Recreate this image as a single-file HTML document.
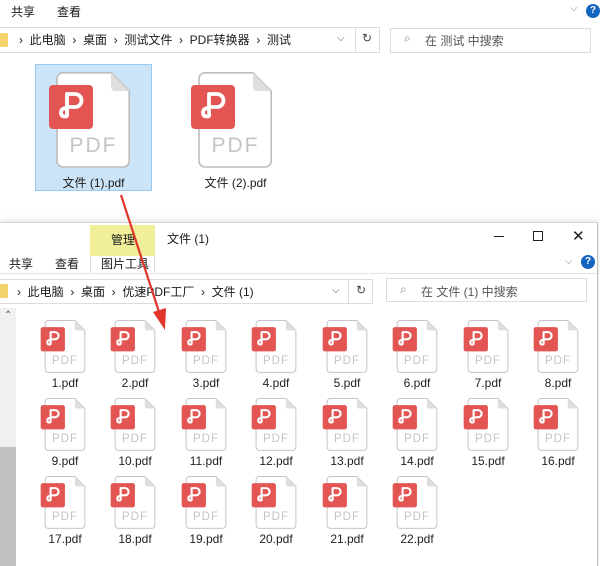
<!DOCTYPE html>
<html><head><meta charset="utf-8">
<style>
*{margin:0;padding:0;box-sizing:border-box}
body{width:600px;height:566px;overflow:hidden;background:#fff;position:relative;font-family:"Liberation Sans","Noto Sans CJK SC",sans-serif;font-size:12px;color:#1a1a1a}
.a{position:absolute;white-space:nowrap}
.ic{position:absolute}
.ic svg{position:absolute;left:-5px;top:0}
.ic .p{position:absolute;left:0;width:40px;text-align:center;top:35px;font-size:11.5px;color:#c4c4c4;letter-spacing:1px;font-family:"Liberation Sans",sans-serif}
.ic .l{position:absolute;left:-20px;width:80px;text-align:center;top:56px;font-size:12px;color:#222}
.box{position:absolute;border:1px solid #dcdcdc;background:#fff}
.help{position:absolute;width:14px;height:14px;border-radius:50%;background:#1565c0;color:#fff;font-size:10px;font-weight:bold;text-align:center;line-height:14px}
</style></head><body>
<svg width="0" height="0" style="position:absolute">
<defs>
<symbol id="ic" viewBox="-9 0 83 98">
<path d="M6 0.8 H54 L72.2 19 V89 a6 6 0 0 1 -6 6 H6 a6 6 0 0 1 -6 -6 V6.8 a6 6 0 0 1 6 -6z" fill="#fff" stroke="#bdbdbd" stroke-width="1.6"/>
<path d="M54 0.8 V15 a4 4 0 0 0 4 4 H72.2z" fill="#dedede"/>
<rect x="-8" y="13" width="44" height="44" rx="4" fill="#e35553"/>
<path d="M10 41 V22 h8 a6.5 6.5 0 0 1 0 13 h-6 M10 36 q-6 0 -6 4.5 q0 4 4 4 q3 0 2 -3.5" fill="none" stroke="#fff" stroke-width="3.8" stroke-linecap="round" stroke-linejoin="round"/>
</symbol>
</defs></svg>

<!-- top window -->
<div class="a" style="left:11px;top:3px">共享</div>
<div class="a" style="left:57px;top:3px">查看</div>
<div class="a" style="left:570px;top:3px;color:#888;font-size:10px">⌵</div>
<div class="help" style="left:586px;top:4px">?</div>
<div class="box" style="left:-2px;top:27px;width:382px;height:26px"></div>
<div class="a" style="left:355px;top:27px;width:1px;height:26px;background:#dcdcdc"></div>
<div class="a" style="left:-4px;top:33px;width:12px;height:14px;background:#f3d36b"></div>
<div class="a" style="left:19px;top:31px">›&nbsp; 此电脑&nbsp; ›&nbsp; 桌面&nbsp; ›&nbsp; 测试文件&nbsp; ›&nbsp; PDF转换器&nbsp; ›&nbsp; 测试</div>
<div class="a" style="left:337px;top:33px;color:#555;font-size:10px">⌵</div>
<div class="a" style="left:362px;top:31px;color:#444">↻</div>
<div class="box" style="left:390px;top:28px;width:201px;height:25px"></div>
<div class="a" style="left:404px;top:31px;color:#888">⌕</div>
<div class="a" style="left:425px;top:32px;color:#555">在 测试 中搜索</div>

<div class="a" style="left:35px;top:64px;width:117px;height:127px;background:#cce4f7;border:1px solid #99c9ef"></div>
<div class="ic" style="left:57px;top:72px"><svg width="83" height="98" style="left:-9px"><use href="#ic"/></svg><div class="p" style="top:62px;width:73px;font-size:21px;letter-spacing:2px">PDF</div></div>
<div class="a" style="left:35px;top:174px;width:117px;text-align:center">文件 (1).pdf</div>
<div class="ic" style="left:199px;top:72px"><svg width="83" height="98" style="left:-9px"><use href="#ic"/></svg><div class="p" style="top:62px;width:73px;font-size:21px;letter-spacing:2px">PDF</div></div>
<div class="a" style="left:177px;top:174px;width:117px;text-align:center">文件 (2).pdf</div>

<!-- bottom window -->
<div class="a" style="left:0;top:222px;width:598px;height:344px;background:#fff;border-top:1px solid #d6d6d6;border-right:1px solid #bbb;box-shadow:0 -2px 6px rgba(0,0,0,.1)"></div>
<div class="a" style="left:90px;top:225px;width:65px;height:31px;background:#f1ef9a"></div>
<div class="a" style="left:111px;top:231px">管理</div>
<div class="a" style="left:90px;top:256px;width:65px;height:18px;background:#fff;border-left:1px solid #ddd;border-right:1px solid #ddd"></div>
<div class="a" style="left:101px;top:255px">图片工具</div>
<div class="a" style="left:167px;top:230px">文件 (1)</div>
<div class="a" style="left:494px;top:236px;width:10px;height:1px;background:#222"></div>
<div class="a" style="left:533px;top:231px;width:10px;height:10px;border:1px solid #222"></div>
<div class="a" style="left:572px;top:227px;font-size:15px">✕</div>
<div class="a" style="left:9px;top:255px">共享</div>
<div class="a" style="left:55px;top:255px">查看</div>
<div class="a" style="left:565px;top:256px;color:#888;font-size:10px">⌵</div>
<div class="help" style="left:581px;top:255px">?</div>
<div class="a" style="left:0;top:273px;width:597px;height:1px;background:#e3e3e3"></div>
<div class="box" style="left:-2px;top:279px;width:375px;height:25px"></div>
<div class="a" style="left:348px;top:279px;width:1px;height:25px;background:#dcdcdc"></div>
<div class="a" style="left:-4px;top:284px;width:12px;height:14px;background:#f3d36b"></div>
<div class="a" style="left:17px;top:283px">›&nbsp; 此电脑&nbsp; ›&nbsp; 桌面&nbsp; ›&nbsp; 优速PDF工厂&nbsp; ›&nbsp; 文件 (1)</div>
<div class="a" style="left:332px;top:285px;color:#555;font-size:10px">⌵</div>
<div class="a" style="left:356px;top:283px;color:#444">↻</div>
<div class="box" style="left:386px;top:278px;width:201px;height:24px"></div>
<div class="a" style="left:400px;top:282px;color:#888">⌕</div>
<div class="a" style="left:421px;top:283px;color:#555">在 文件 (1) 中搜索</div>
<div class="a" style="left:0;top:308px;width:16px;height:258px;background:#f0f0f0"></div>
<div class="a" style="left:0;top:447px;width:16px;height:119px;background:#c2c2c2"></div>
<div class="a" style="left:4px;top:310px;font-size:10px;color:#555">⌃</div>

<div class="ic" style="left:45px;top:320px"><svg width="46" height="54"><use href="#ic"/></svg><div class="p">PDF</div><div class="l">1.pdf</div></div>
<div class="ic" style="left:115px;top:320px"><svg width="46" height="54"><use href="#ic"/></svg><div class="p">PDF</div><div class="l">2.pdf</div></div>
<div class="ic" style="left:186px;top:320px"><svg width="46" height="54"><use href="#ic"/></svg><div class="p">PDF</div><div class="l">3.pdf</div></div>
<div class="ic" style="left:256px;top:320px"><svg width="46" height="54"><use href="#ic"/></svg><div class="p">PDF</div><div class="l">4.pdf</div></div>
<div class="ic" style="left:327px;top:320px"><svg width="46" height="54"><use href="#ic"/></svg><div class="p">PDF</div><div class="l">5.pdf</div></div>
<div class="ic" style="left:397px;top:320px"><svg width="46" height="54"><use href="#ic"/></svg><div class="p">PDF</div><div class="l">6.pdf</div></div>
<div class="ic" style="left:468px;top:320px"><svg width="46" height="54"><use href="#ic"/></svg><div class="p">PDF</div><div class="l">7.pdf</div></div>
<div class="ic" style="left:538px;top:320px"><svg width="46" height="54"><use href="#ic"/></svg><div class="p">PDF</div><div class="l">8.pdf</div></div>

<div class="ic" style="left:45px;top:398px"><svg width="46" height="54"><use href="#ic"/></svg><div class="p">PDF</div><div class="l">9.pdf</div></div>
<div class="ic" style="left:115px;top:398px"><svg width="46" height="54"><use href="#ic"/></svg><div class="p">PDF</div><div class="l">10.pdf</div></div>
<div class="ic" style="left:186px;top:398px"><svg width="46" height="54"><use href="#ic"/></svg><div class="p">PDF</div><div class="l">11.pdf</div></div>
<div class="ic" style="left:256px;top:398px"><svg width="46" height="54"><use href="#ic"/></svg><div class="p">PDF</div><div class="l">12.pdf</div></div>
<div class="ic" style="left:327px;top:398px"><svg width="46" height="54"><use href="#ic"/></svg><div class="p">PDF</div><div class="l">13.pdf</div></div>
<div class="ic" style="left:397px;top:398px"><svg width="46" height="54"><use href="#ic"/></svg><div class="p">PDF</div><div class="l">14.pdf</div></div>
<div class="ic" style="left:468px;top:398px"><svg width="46" height="54"><use href="#ic"/></svg><div class="p">PDF</div><div class="l">15.pdf</div></div>
<div class="ic" style="left:538px;top:398px"><svg width="46" height="54"><use href="#ic"/></svg><div class="p">PDF</div><div class="l">16.pdf</div></div>

<div class="ic" style="left:45px;top:476px"><svg width="46" height="54"><use href="#ic"/></svg><div class="p">PDF</div><div class="l">17.pdf</div></div>
<div class="ic" style="left:115px;top:476px"><svg width="46" height="54"><use href="#ic"/></svg><div class="p">PDF</div><div class="l">18.pdf</div></div>
<div class="ic" style="left:186px;top:476px"><svg width="46" height="54"><use href="#ic"/></svg><div class="p">PDF</div><div class="l">19.pdf</div></div>
<div class="ic" style="left:256px;top:476px"><svg width="46" height="54"><use href="#ic"/></svg><div class="p">PDF</div><div class="l">20.pdf</div></div>
<div class="ic" style="left:327px;top:476px"><svg width="46" height="54"><use href="#ic"/></svg><div class="p">PDF</div><div class="l">21.pdf</div></div>
<div class="ic" style="left:397px;top:476px"><svg width="46" height="54"><use href="#ic"/></svg><div class="p">PDF</div><div class="l">22.pdf</div></div>

<!-- red arrow -->
<svg class="a" style="left:0;top:0" width="600" height="566">
<line x1="121" y1="195" x2="160" y2="315" stroke="#e0352b" stroke-width="2.2"/>
<polygon points="165,330 153,312 166,308" fill="#e0352b"/>
</svg>
</body></html>
